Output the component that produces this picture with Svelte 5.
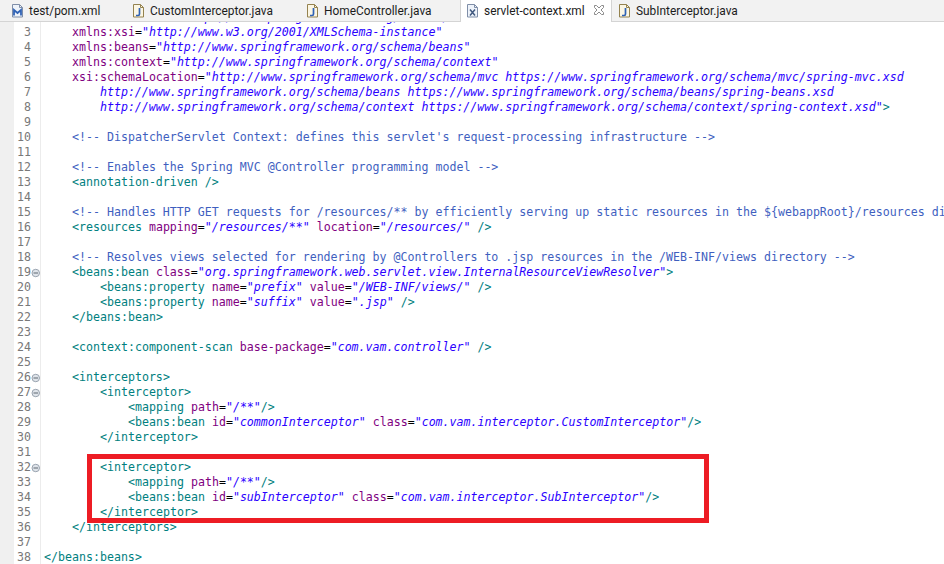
<script lang="ts">
  const tabs = [
    { name: "test/pom.xml", icon: "m", width: 121 },
    { name: "CustomInterceptor.java", icon: "j", width: 174 },
    { name: "HomeController.java", icon: "j", width: 165 },
    { name: "servlet-context.xml", icon: "x", width: 152, active: true },
    { name: "SubInterceptor.java", icon: "j", width: 160, afterActive: true },
  ];

  const source = `<beans:beans xmlns="http://www.springframework.org/schema/mvc"
    xmlns:xsi="http://www.w3.org/2001/XMLSchema-instance"
    xmlns:beans="http://www.springframework.org/schema/beans"
    xmlns:context="http://www.springframework.org/schema/context"
    xsi:schemaLocation="http://www.springframework.org/schema/mvc https://www.springframework.org/schema/mvc/spring-mvc.xsd
        http://www.springframework.org/schema/beans https://www.springframework.org/schema/beans/spring-beans.xsd
        http://www.springframework.org/schema/context https://www.springframework.org/schema/context/spring-context.xsd">

    <!-- DispatcherServlet Context: defines this servlet's request-processing infrastructure -->

    <!-- Enables the Spring MVC @Controller programming model -->
    <annotation-driven />

    <!-- Handles HTTP GET requests for /resources/** by efficiently serving up static resources in the \${webappRoot}/resources directory -->
    <resources mapping="/resources/**" location="/resources/" />

    <!-- Resolves views selected for rendering by @Controllers to .jsp resources in the /WEB-INF/views directory -->
    <beans:bean class="org.springframework.web.servlet.view.InternalResourceViewResolver">
        <beans:property name="prefix" value="/WEB-INF/views/" />
        <beans:property name="suffix" value=".jsp" />
    </beans:bean>

    <context:component-scan base-package="com.vam.controller" />

    <interceptors>
        <interceptor>
            <mapping path="/**"/>
            <beans:bean id="commonInterceptor" class="com.vam.interceptor.CustomInterceptor"/>
        </interceptor>

        <interceptor>
            <mapping path="/**"/>
            <beans:bean id="subInterceptor" class="com.vam.interceptor.SubInterceptor"/>
        </interceptor>
    </interceptors>

</beans:beans>`;

  const folds = [19, 26, 27, 32];

  // small xml highlighter, keeps string state because schemaLocation spans lines
  function highlight(text: string) {
    let inString = false;
    return text.split("\n").map((line) => {
      const out: { c: string; t: string }[] = [];
      let rest = line;
      while (rest.length) {
        let m;
        if (inString) {
          const end = rest.indexOf('"');
          const lead = rest.match(/^\s+/);
          if (lead) {
            out.push({ c: "", t: lead[0] });
            rest = rest.slice(lead[0].length);
          } else if (end < 0) {
            out.push({ c: "str", t: rest });
            rest = "";
          } else {
            out.push({ c: "str", t: rest.slice(0, end + 1) });
            rest = rest.slice(end + 1);
            inString = false;
          }
        } else if ((m = rest.match(/^<!--.*?-->/))) {
          out.push({ c: "com", t: m[0] });
          rest = rest.slice(m[0].length);
        } else if ((m = rest.match(/^(<\/?[\w:-]+|\/?>)/))) {
          out.push({ c: "tag", t: m[0] });
          rest = rest.slice(m[0].length);
        } else if ((m = rest.match(/^[\w:-]+/))) {
          out.push({ c: "attr", t: m[0] });
          rest = rest.slice(m[0].length);
        } else if (rest[0] === '"') {
          inString = true;
          out.push({ c: "str", t: '"' });
          rest = rest.slice(1);
        } else {
          out.push({ c: "", t: rest[0] });
          rest = rest.slice(1);
        }
      }
      return out;
    });
  }

  const lines = highlight(source);
</script>

<div class="page">
  <div class="tabbar">
    {#each tabs as tab}
      <div class="tab" class:active={tab.active} class:after={tab.afterActive} style="width: {tab.width}px">
        <svg class="file" width="16" height="16" viewBox="0 0 16 16" fill="none">
          <path
            d="M1.500 2.500h7l3 3v9.500h-10z"
            fill={tab.icon === "j" ? "#fbf6e4" : "#eef3fa"}
            stroke={tab.icon === "j" ? "#94824f" : "#7f8ea8"} />
          <path d="M8.500 2.500v3h3" stroke={tab.icon === "j" ? "#94824f" : "#7f8ea8"} />
          {#if tab.icon === "j"}
            <path d="M7.500 6v6q0 1.500-1.500 1.500H4" stroke="#2f62b5" stroke-width="1.700" />
          {:else if tab.icon === "m"}
            <path d="M3 13.500V8l3.500 3L10 8v5.500" stroke="#2f62b5" stroke-width="1.800" />
          {:else}
            <path d="M4 7.500l5 6M9 7.500l-5 6" stroke="#41597f" stroke-width="1.500" />
          {/if}
        </svg>
        <span class="name">{tab.name}</span>
        {#if tab.active}
          <svg class="close" width="12" height="12" viewBox="0 0 12 12" fill="#fff" stroke="#8c8c8c">
            <path d="M1.500 1.500h2L6 4l2.500-2.500h2v2L8 6l2.500 2.500v2h-2L6 8l-2.500 2.500h-2v-2L4 6 1.500 3.500z" />
          </svg>
        {/if}
      </div>
    {/each}
  </div>

  <div class="editor">
    <div class="lines">
      {#each lines as tokens, i}
        <div class="row">
          <span class="strip"></span>
          <span class="num">{i + 2}</span>
          <span class="fold">
            {#if folds.includes(i + 2)}
              <svg width="10" height="10" viewBox="0 0 10 10">
                <circle cx="4.750" cy="5" r="3.750" fill="#dfe4ea" stroke="#9aa4b0" />
                <path d="M2.500 5h4.500" stroke="#5c6670" />
              </svg>
            {/if}
          </span>
          <span class="code">{#each tokens as tok}<span class={tok.c}>{tok.t}</span>{/each}</span>
        </div>
      {/each}
    </div>
    <div class="highlight"></div>
  </div>
</div>

<style>
  :global(body) {
    margin: 0;
    background: #fff;
  }

  .page {
    width: 944px;
    height: 564px;
    overflow: hidden;
    display: flex;
    flex-direction: column;
  }

  .tabbar {
    flex: none;
    height: 21px;
    display: flex;
    background: #f2f2f2;
    border-bottom: 1px solid #d4d4d4;
    font: 11.9px Roboto, sans-serif;
    color: #1c1c1c;
    white-space: nowrap;
  }

  .tab {
    flex: none;
    box-sizing: border-box;
    display: flex;
    align-items: center;
    padding: 0 0 1px 11px;
    gap: 2px;
  }

  .tab.active {
    background: #fff;
    height: 22px;
    border-right: 1px solid #d4d4d4;
    border-left: 1px solid #d4d4d4;
    padding: 0 0 2px 5px;
  }

  .tab.after {
    padding-left: 6px;
  }

  .file {
    flex: none;
  }

  .name {
    margin-top: 2px;
  }

  .close {
    margin-left: 6px;
  }

  .editor {
    position: relative;
    flex: 1;
    min-height: 0;
    overflow: hidden;
  }

  .lines {
    margin-top: -12px;
    font: 11.62px/15px "DejaVu Sans Mono", monospace;
  }

  .row {
    display: flex;
    height: 15px;
  }

  .strip {
    flex: none;
    width: 14px;
    background: #f0f0f0;
  }

  .num {
    flex: none;
    width: 17px;
    text-align: right;
    color: #787878;
  }

  .fold {
    flex: none;
    width: 9px;
    display: flex;
    align-items: center;
    border-right: 1px solid #ececec;
    overflow: visible;
  }

  .fold svg {
    flex: none;
  }

  .code {
    padding-left: 3px;
    white-space: pre;
    color: #000;
  }

  .tag {
    color: #008080;
  }

  .attr {
    color: #7f007f;
  }

  .str {
    color: #2a00ff;
    font-style: italic;
  }

  .com {
    color: #3f5fbf;
  }

  .highlight {
    position: absolute;
    left: 87px;
    top: 432px;
    width: 622px;
    height: 69px;
    box-sizing: border-box;
    border: 5px solid #ed1c24;
  }
</style>
